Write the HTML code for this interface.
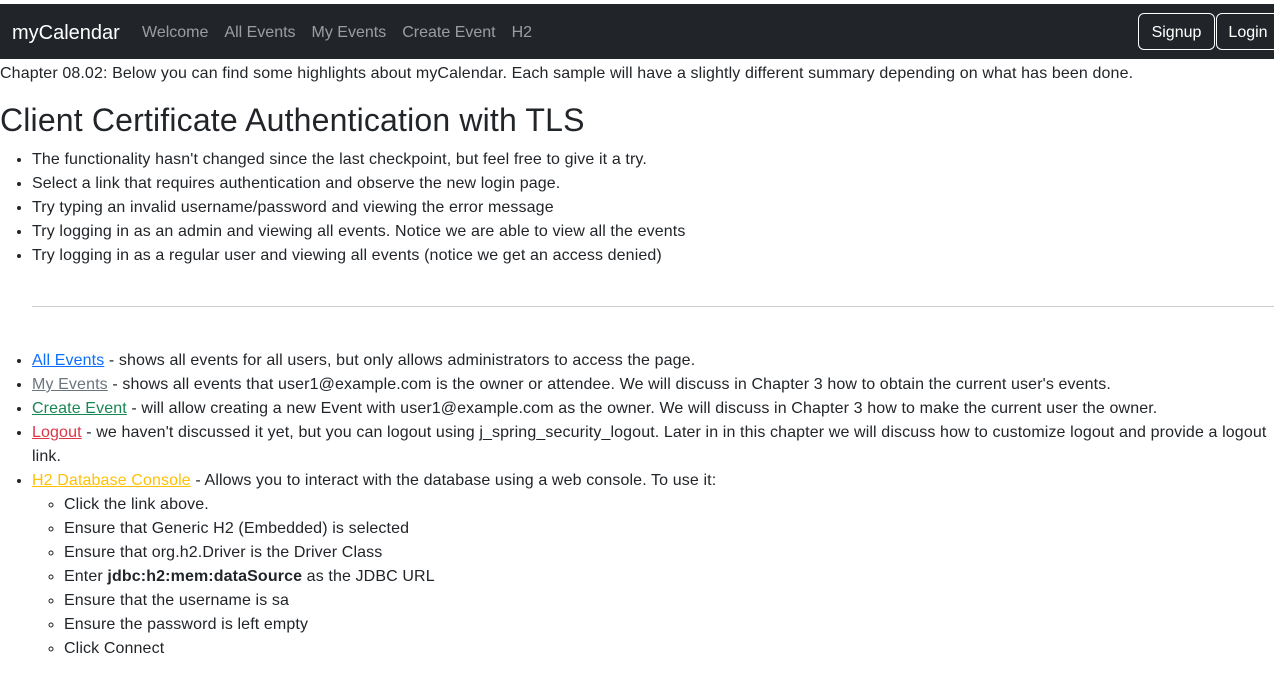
<!DOCTYPE html>
<html><head><style>
body{margin:0;font-family:"Liberation Sans",sans-serif;font-size:16px;line-height:24px;color:#212529;width:1274px;overflow:hidden;letter-spacing:0.12px;}
.nav{position:absolute;top:4px;left:0;width:1274px;height:55px;background:#212529;}
.brand{position:absolute;left:12px;top:17px;color:#fff;font-size:20px;line-height:24px;letter-spacing:0;}
.links{position:absolute;left:142px;top:17px;color:rgba(255,255,255,.55);font-size:16px;line-height:24px;letter-spacing:0;}
.links span{margin-right:16px;}
.btn{position:absolute;top:9px;height:37px;border:1px solid #fff;border-radius:6px;color:#fff;line-height:37px;text-align:center;box-sizing:border-box;letter-spacing:0;}
.main{position:absolute;top:62px;left:0;width:1300px;}
p{margin:0;}
h1{margin:0;font-size:32px;line-height:38px;font-weight:500;position:absolute;top:39px;left:0;white-space:nowrap;letter-spacing:0.17px;}
ul{margin:0;padding-left:32px;}
.u1{position:absolute;top:86px;left:0;}
hr{position:absolute;top:244px;left:32px;width:1260px;margin:0;border:0;border-top:1px solid #ccc;}
.u2{position:absolute;top:287px;left:0;width:1274px;}
a{text-decoration:underline;}
ul ul{list-style:circle;}
</style></head><body>
<div class="nav">
<div class="brand">myCalendar</div>
<div class="links"><span>Welcome</span><span>All Events</span><span>My Events</span><span>Create Event</span><span>H2</span></div>
<div class="btn" style="left:1138px;width:77px">Signup</div>
<div class="btn" style="left:1216px;width:64px">Login</div>
</div>
<div class="main">
<p style="position:absolute;top:0;left:0;white-space:nowrap">Chapter 08.02: Below you can find some highlights about myCalendar. Each sample will have a slightly different summary depending on what has been done.</p>
<h1>Client Certificate Authentication with TLS</h1>
<ul class="u1">
<li>The functionality hasn't changed since the last checkpoint, but feel free to give it a try.</li>
<li>Select a link that requires authentication and observe the new login page.</li>
<li>Try typing an invalid username/password and viewing the error message</li>
<li>Try logging in as an admin and viewing all events. Notice we are able to view all the events</li>
<li>Try logging in as a regular user and viewing all events (notice we get an access denied)</li>
</ul>
<hr>
<ul class="u2">
<li><a style="color:#0d6efd">All Events</a> - shows all events for all users, but only allows administrators to access the page.</li>
<li><a style="color:#6c757d">My Events</a> - shows all events that user1@example.com is the owner or attendee. We will discuss in Chapter 3 how to obtain the current user's events.</li>
<li><a style="color:#198754">Create Event</a> - will allow creating a new Event with user1@example.com as the owner. We will discuss in Chapter 3 how to make the current user the owner.</li>
<li><span style="white-space:nowrap"><a style="color:#dc3545">Logout</a> - we haven't discussed it yet, but you can logout using j_spring_security_logout. Later in in this chapter we will discuss how to customize logout and provide a logout</span><br>link.</li>
<li><a style="color:#ffc107">H2 Database Console</a> - Allows you to interact with the database using a web console. To use it:
<ul>
<li>Click the link above.</li>
<li>Ensure that Generic H2 (Embedded) is selected</li>
<li>Ensure that org.h2.Driver is the Driver Class</li>
<li>Enter <b>jdbc:h2:mem:dataSource</b> as the JDBC URL</li>
<li>Ensure that the username is sa</li>
<li>Ensure the password is left empty</li>
<li>Click Connect</li>
</ul></li>
</ul>
</div>
</body></html>
